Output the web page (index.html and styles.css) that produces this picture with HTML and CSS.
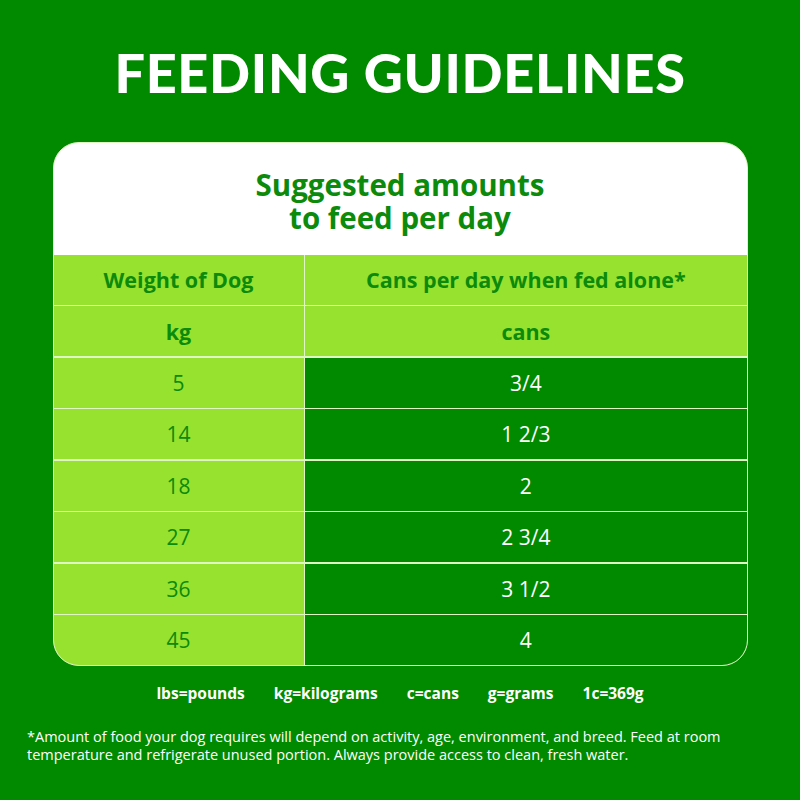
FILE: index.html
```html
<!DOCTYPE html>
<html>
<head>
<meta charset="utf-8">
<link rel="stylesheet" href="styles.css">
</head>
<body>
<div class="page">
  <h1 class="title">FEEDING GUIDELINES</h1>
  <div class="card">
    <div class="card-head">
      <div class="head-line">Suggested amounts</div>
      <div class="head-line">to feed per day</div>
    </div>
    <div class="table">
      <div class="cell hd">Weight of Dog</div>
      <div class="cell hd">Cans per day when fed alone*</div>
      <div class="cell hd">kg</div>
      <div class="cell hd">cans</div>
      <div class="cell wt">5</div><div class="cell amt">3/4</div>
      <div class="cell wt">14</div><div class="cell amt">1 2/3</div>
      <div class="cell wt">18</div><div class="cell amt">2</div>
      <div class="cell wt">27</div><div class="cell amt">2 3/4</div>
      <div class="cell wt">36</div><div class="cell amt">3 1/2</div>
      <div class="cell wt">45</div><div class="cell amt">4</div>
    </div>
  </div>
  <div class="legend">
    <span>lbs=pounds</span><span>kg=kilograms</span><span>c=cans</span><span>g=grams</span><span>1c=369g</span>
  </div>
  <p class="note">*Amount of food your dog requires will depend on activity, age, environment, and breed. Feed at room temperature and refrigerate unused portion. Always provide access to clean, fresh water.</p>
</div>
</body>
</html>
```

FILE: styles.css
```css
html, body {
  margin: 0;
  padding: 0;
}
body {
  background: #018a00;
  font-family: "Open Sans", "Noto Sans", sans-serif;
  width: 800px;
  height: 800px;
  overflow: hidden;
}
.page {
  display: flex;
  flex-direction: column;
  align-items: center;
}
.title {
  margin: 38px 0 0;
  color: #ffffff;
  font-family: "Lato", "Open Sans", sans-serif;
  font-size: 54px;
  font-weight: 900;
  letter-spacing: 0.7px;
  line-height: 70px;
}
.card {
  margin-top: 34px;
  width: 695px;
  border: 1.5px solid #dff5c4;
  border-radius: 26px;
  overflow: hidden;
  background: #dff5c4;
  box-sizing: border-box;
}
.card-head {
  background: #ffffff;
  height: 112px;
  padding-top: 3px;
  box-sizing: border-box;
  display: flex;
  flex-direction: column;
  align-items: center;
  justify-content: center;
  text-align: center;
  color: #0b8a0b;
  font-size: 29.5px;
  font-weight: 700;
}
.head-line {
  line-height: 33px;
  height: 33px;
}
.table {
  display: grid;
  grid-template-columns: 250px 1fr;
  grid-auto-rows: 49.8px;
  gap: 1.7px;
}
.cell {
  display: flex;
  align-items: center;
  justify-content: center;
  font-size: 21px;
}
.hd {
  background: #97e22f;
  color: #0b8a0b;
  font-weight: 700;
  font-size: 21.5px;
}
.wt {
  background: #97e22f;
  color: #0b8a0b;
}
.amt {
  background: #018a00;
  color: #ffffff;
}
.legend {
  margin-top: 16px;
  display: flex;
  gap: 29px;
  color: #ffffff;
  font-weight: 700;
  font-size: 15.5px;
}
.note {
  align-self: stretch;
  margin: 24px 0 0;
  padding: 0 27px;
  color: #ffffff;
  font-size: 14.5px;
  line-height: 18px;
}
```
